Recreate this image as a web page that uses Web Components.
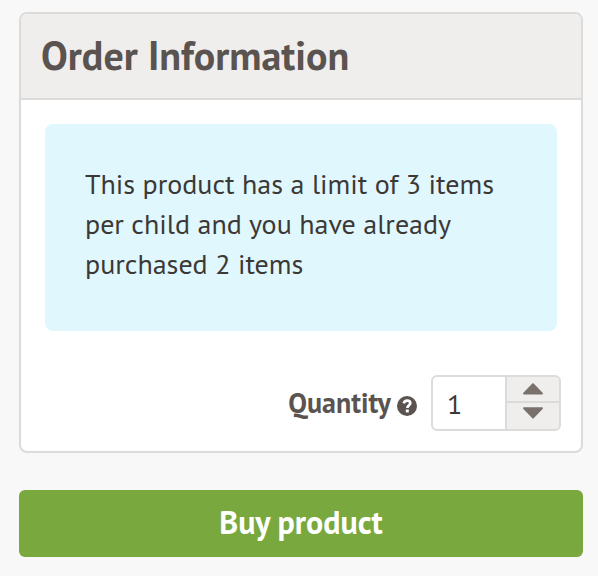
<!DOCTYPE html>
<html lang="en">
<head>
<meta charset="utf-8">
<title>Order Information</title>
<style>
  body {
    margin: 0;
    padding: 12px 15px 0 19px;
    background: #f8f8f8;
    color: #3b3835;
    font-family: "PT Sans", "Noto Sans CJK SC", "Noto Sans", sans-serif;
    font-size: 28px;
  }

  buy-button {
    margin-top: 37px;
  }
</style>
</head>
<body>
<order-card>
  <span slot="title">Order Information</span>
  <info-message>
    <div>This product has a limit of 3 items</div>
    <div>per child and you have already</div>
    <div>purchased 2 items</div>
  </info-message>
  <quantity-field value="1">Quantity</quantity-field>
</order-card>
<buy-button>Buy product</buy-button>

<template id="order-card-template">
  <style>
    :host {
      display: block;
      box-sizing: border-box;
      height: 441px;
      border: 2px solid #dcdbda;
      border-radius: 8px;
      background: #fff;
      overflow: hidden;
    }

    h2 {
      box-sizing: border-box;
      height: 86px;
      margin: 0;
      padding: 0 20px;
      border-bottom: 2px solid #dcdbda;
      background: #efeeec;
      color: #5a5350;
      font-size: 40px;
      font-weight: bold;
      line-height: 83px;
      white-space: nowrap;
    }

    .body {
      padding: 24px 20px 20px 24px;
    }
  </style>
  <h2><slot name="title"></slot></h2>
  <div class="body"><slot></slot></div>
</template>

<template id="info-message-template">
  <style>
    :host {
      display: block;
      box-sizing: border-box;
      height: 207px;
      margin-right: 4px;
      padding: 40px;
      border-radius: 8px;
      background: #e0f7fe;
      line-height: 40px;
      white-space: nowrap;
    }
  </style>
  <slot></slot>
</template>

<template id="quantity-field-template">
  <style>
    :host {
      display: flex;
      justify-content: flex-end;
      align-items: center;
      height: 56px;
      margin-top: 44px;
    }

    label {
      color: #5a5350;
      font-weight: bold;
      line-height: 56px;
    }

    .help {
      width: 20px;
      height: 20px;
      margin: 5px 14px 0 6px;
    }

    .spinner {
      display: grid;
      grid-template-columns: 72px 54px;
      box-sizing: border-box;
      width: 130px;
      height: 56px;
      border: 2px solid #dcdbda;
      border-radius: 6px;
      background: #fff;
      overflow: hidden;
    }

    .value {
      padding-left: 14px;
      line-height: 53px;
    }

    .steps {
      display: grid;
      grid-template-rows: 24px 2px 26px;
      border-left: 2px solid #dcdbda;
      background: #dcdbda;
    }

    .step {
      padding: 0;
      border: 0;
      background: #efeeec;
      line-height: 0;
      text-align: center;
    }

    .down {
      grid-row: 3;
    }

    .step svg {
      display: block;
      margin: 0 auto;
      fill: #7a706c;
    }

    .up svg {
      margin-top: -1px;
    }

    .down svg {
      margin-top: -6px;
    }
  </style>
  <label><slot></slot></label>
  <svg class="help" viewBox="0 0 20 20">
    <circle cx="10" cy="10" r="10" fill="#5a5350"/>
    <path d="M6.7 7.4C7.2 5.5 8.4 4.6 10.2 4.6c1.9 0 3.1 1 3.1 2.5 0 2.2-2.9 2.3-2.9 4.9" fill="none" stroke="#fff" stroke-width="2.7"/>
    <path d="M8.8 13.5h3v2.9h-3z" fill="#fff"/>
  </svg>
  <div class="spinner">
    <div class="value"></div>
    <div class="steps">
      <button class="step up" aria-label="Increase">
        <svg width="20" height="12" viewBox="0 0 20 12"><path d="M9.3.6q.7-.8 1.4 0l8.9 9.2q.9 1.7-.6 1.7H1Q-.5 11.5.4 9.8z"/></svg>
      </button>
      <button class="step down" aria-label="Decrease">
        <svg width="20" height="12" viewBox="0 0 20 12"><path d="M9.3 11.2q.7.8 1.4 0l8.9-9.2Q20.5.3 19 .3H1Q-.5.3.4 2z"/></svg>
      </button>
    </div>
  </div>
</template>

<template id="buy-button-template">
  <style>
    :host {
      display: block;
    }

    button {
      display: block;
      width: 100%;
      height: 67px;
      padding: 0 0 2px;
      border: 0;
      border-radius: 6px;
      background: #78a83e;
      color: #fff;
      font: bold 32px/65px "PT Sans", "Noto Sans CJK SC", "Noto Sans", sans-serif;
    }
  </style>
  <button><slot></slot></button>
</template>

<script>
  class TemplateElement extends HTMLElement {
    connectedCallback() {
      if (this.shadowRoot) return;
      const template = document.getElementById(`${this.localName}-template`);
      this.attachShadow({ mode: "open" });
      this.shadowRoot.appendChild(template.content.cloneNode(true));
    }
  }

  customElements.define("order-card", class extends TemplateElement {});
  customElements.define("info-message", class extends TemplateElement {});
  customElements.define("buy-button", class extends TemplateElement {});

  customElements.define(
    "quantity-field",
    class extends TemplateElement {
      connectedCallback() {
        super.connectedCallback();
        this.shadowRoot
          .querySelector(".up")
          .addEventListener("click", () => this.step(1));
        this.shadowRoot
          .querySelector(".down")
          .addEventListener("click", () => this.step(-1));
        this.render();
      }

      step(amount) {
        const value = Number(this.getAttribute("value")) + amount;
        this.setAttribute("value", Math.max(1, value));
        this.render();
      }

      render() {
        this.shadowRoot.querySelector(".value").textContent =
          this.getAttribute("value");
      }
    }
  );
</script>
</body>
</html>
